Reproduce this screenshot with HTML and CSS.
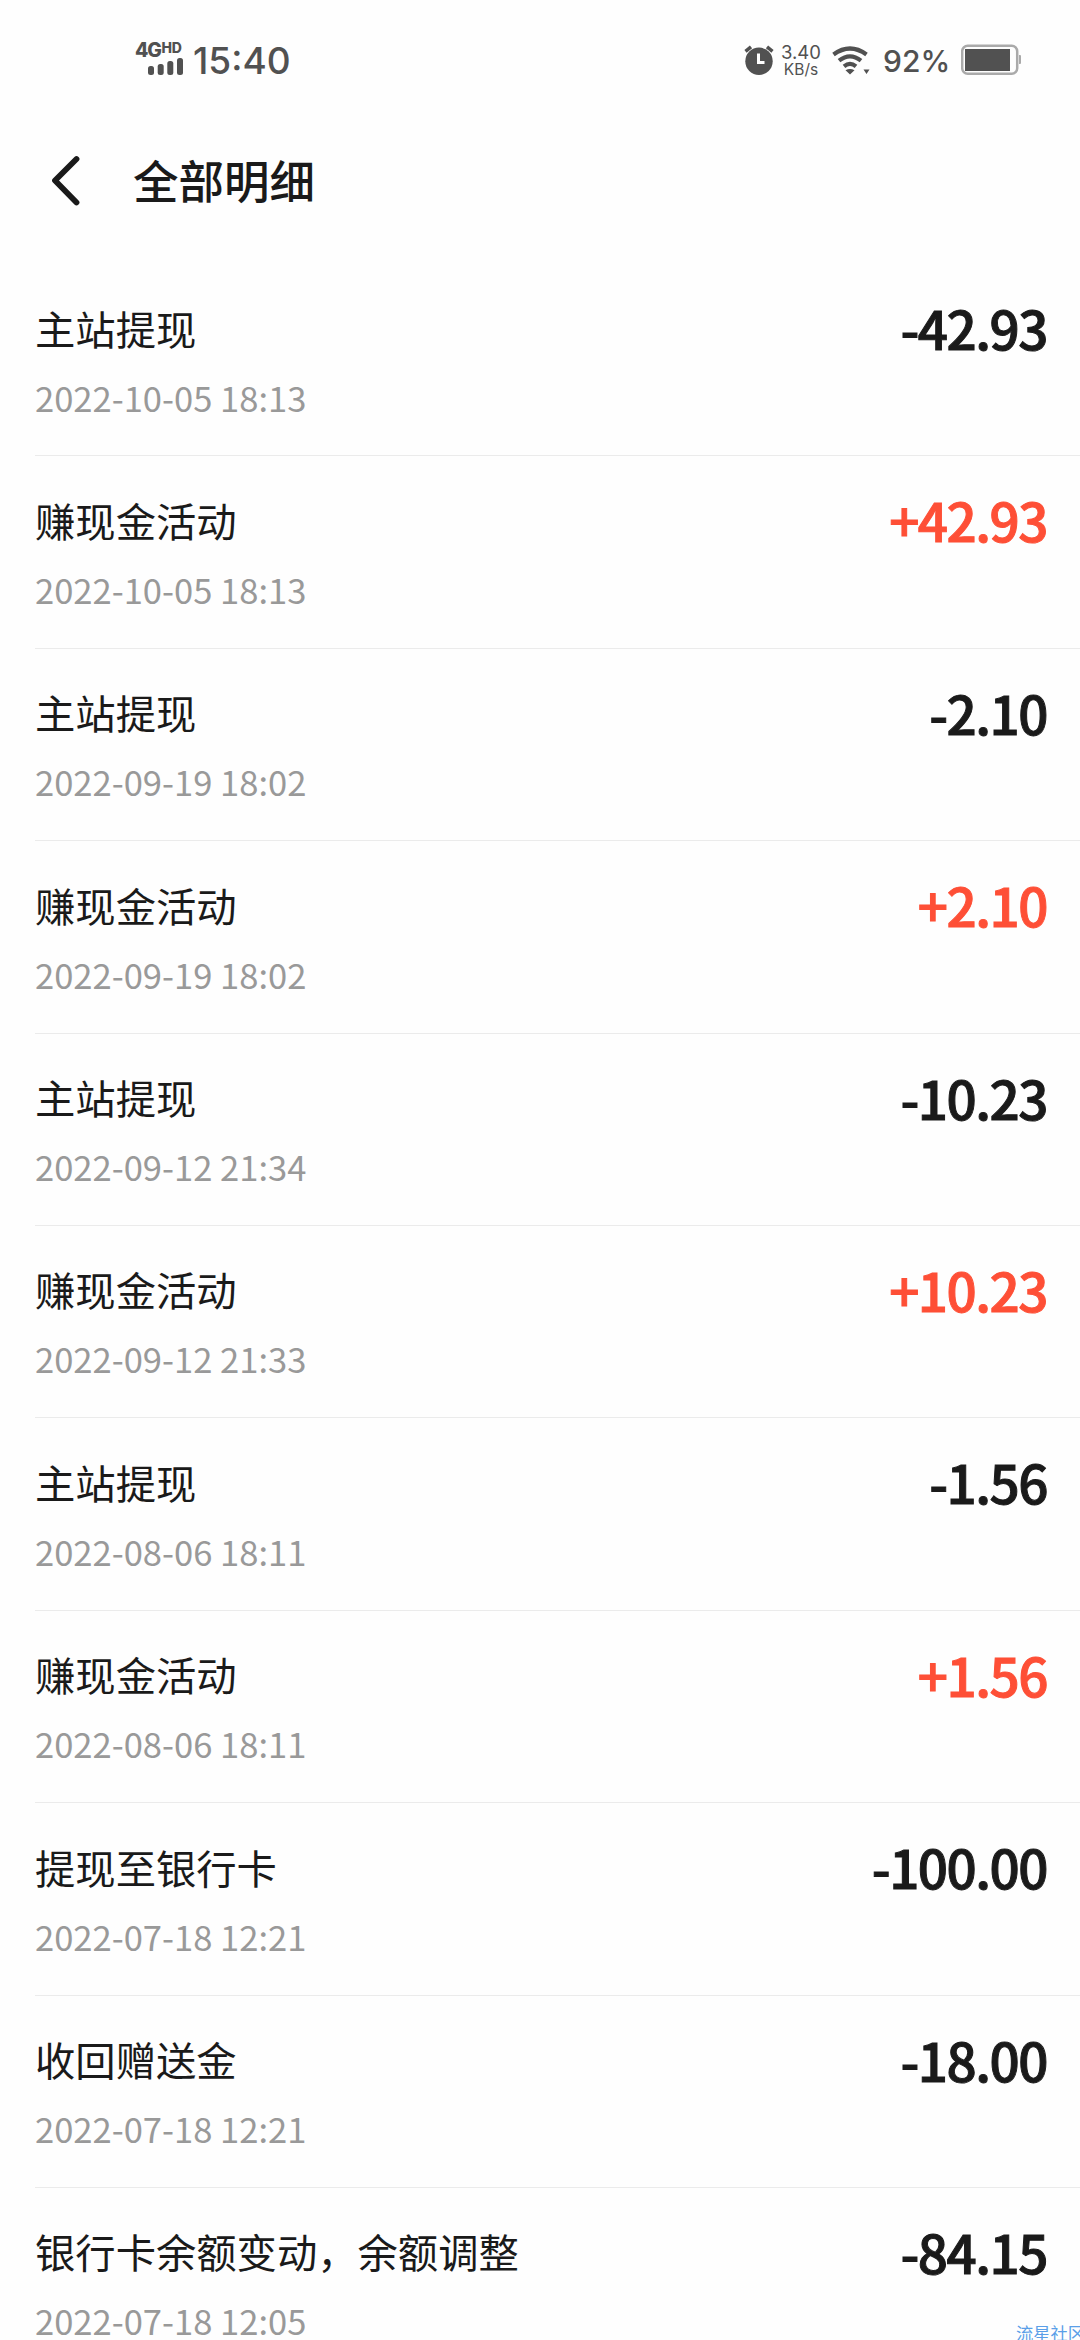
FILE: index.html
```html
<!DOCTYPE html>
<html lang="zh-CN">
<head>
<meta charset="utf-8">
<title>全部明细</title>
<link rel="stylesheet" href="styles.css">
</head>
<body>
<div class="screen">
  <div class="status">
    <div class="signal">
      <div class="network"><span class="gen">4G</span><span class="hd">HD</span></div>
      <svg class="bars" width="36" height="17" viewBox="0 0 36 17"><rect x="0" y="8" width="6" height="9" rx="2.5"/><rect x="9.7" y="6" width="6" height="11" rx="2.5"/><rect x="19.3" y="3" width="6" height="14" rx="2.5"/><rect x="29" y="0" width="6" height="17" rx="2.5"/></svg>
    </div>
    <div class="clock">15:40</div>
    <svg class="alarm" width="30" height="30" viewBox="0 0 30 30"><circle cx="15" cy="16.3" r="13.7"/><path class="bell" d="M1.500 6.300 7 1.800M28.500 6.300 23 1.800"/><path class="hands" d="M14.500 8.500V17.500H20.500"/></svg>
    <div class="speed"><span class="rate">3.40</span><span class="unit">KB/s</span></div>
    <svg class="wifi" width="38" height="29" viewBox="0 0 38 29"><g class="arcs"><path d="M1.5 8.500Q18 -3.500 34.5 8.500"/><path d="M7 14.700Q18 6 29 14.700"/><path d="M12 20.300Q18 15.500 24 20.300"/></g><path d="M13.500 24.300Q18 21.500 22.500 24.300L18 28.500ZM31.500 23.500H37.500L34.500 28Z"/></svg>
    <div class="percent">92%</div>
    <svg class="battery" width="62" height="32" viewBox="0 0 62 32"><rect class="case" x="1.2" y="1.7" width="55" height="28" rx="5.500"/><rect x="4" y="5" width="45" height="22"/><path class="tip" d="M58 11H59Q60 11 60 12V19Q60 20 59 20H58Z"/></svg>
  </div>
  <header class="header">
    <svg class="back" width="32" height="52" viewBox="0 0 32 52"><path d="M28.500 4 7 25.500 28.500 47.500"/></svg>
    <h1 class="heading">全部明细</h1>
  </header>
  <main class="list">
    <div class="row"><div class="info"><div class="name">主站提现</div><div class="date">2022-10-05 18:13</div></div><div class="amount">-42.93</div></div>
    <div class="row"><div class="info"><div class="name">赚现金活动</div><div class="date">2022-10-05 18:13</div></div><div class="amount income">+42.93</div></div>
    <div class="row"><div class="info"><div class="name">主站提现</div><div class="date">2022-09-19 18:02</div></div><div class="amount">-2.10</div></div>
    <div class="row"><div class="info"><div class="name">赚现金活动</div><div class="date">2022-09-19 18:02</div></div><div class="amount income">+2.10</div></div>
    <div class="row"><div class="info"><div class="name">主站提现</div><div class="date">2022-09-12 21:34</div></div><div class="amount">-10.23</div></div>
    <div class="row"><div class="info"><div class="name">赚现金活动</div><div class="date">2022-09-12 21:33</div></div><div class="amount income">+10.23</div></div>
    <div class="row"><div class="info"><div class="name">主站提现</div><div class="date">2022-08-06 18:11</div></div><div class="amount">-1.56</div></div>
    <div class="row"><div class="info"><div class="name">赚现金活动</div><div class="date">2022-08-06 18:11</div></div><div class="amount income">+1.56</div></div>
    <div class="row"><div class="info"><div class="name">提现至银行卡</div><div class="date">2022-07-18 12:21</div></div><div class="amount">-100.00</div></div>
    <div class="row"><div class="info"><div class="name">收回赠送金</div><div class="date">2022-07-18 12:21</div></div><div class="amount">-18.00</div></div>
    <div class="row"><div class="info"><div class="name">银行卡余额变动，余额调整</div><div class="date">2022-07-18 12:05</div></div><div class="amount">-84.15</div></div>
  </main>
  <div class="watermark">流星社区</div>
</div>
</body>
</html>
```
FILE: styles.css
```css
* { box-sizing: border-box; }
body { margin: 0; background: #fefefe; }
.screen {
  position: relative;
  width: 1080px;
  height: 2340px;
  overflow: hidden;
  background: #fefefe;
  color: #1a1a1a;
  font-family: "Noto Sans CJK SC", sans-serif;
}
.status {
  display: flex;
  align-items: flex-start;
  height: 120px;
  padding: 40px 57px 0 135px;
  color: #515151;
  fill: #515151;
  font-family: Inter, sans-serif;
}
.signal { width: 48px; margin-right: 10px; }
.network { display: flex; height: 18px; padding-top: 1px; font-weight: 800; line-height: 18px; white-space: nowrap; }
.gen { width: 26.5px; font-size: 19.5px; letter-spacing: -1.2px; }
.hd { margin-top: -2px; font-size: 14px; letter-spacing: -0.3px; }
.bars { display: block; margin: 0 0 0 13px; }
.clock { font-size: 37px; font-weight: 500; line-height: 41px; }
.alarm { margin: 5px 6px 0 auto; }
.bell { fill: none; stroke: #515151; stroke-width: 3.5; }
.hands { fill: none; stroke: #fff; stroke-width: 3; }
.speed { display: flex; flex-direction: column; align-items: center; width: 42px; padding-top: 3px; }
.rate { font-size: 18.5px; line-height: 19px; }
.unit { font-size: 15.5px; line-height: 16px; }
.wifi { margin: 6px 1px 0 10px; }
.arcs { fill: none; stroke: #515151; stroke-width: 4.2; }
.percent { width: 67px; margin: 0 11px 0 12px; font-size: 30px; font-weight: 500; line-height: 42px; }
.battery { margin-top: 4px; }
.case { fill: none; stroke: #aaa; stroke-width: 2.5; }
.tip { fill: #aaa; }
.header { display: flex; align-items: center; height: 144px; padding: 0 0 23px 48px; }
.back { fill: none; stroke: #1a1a1a; stroke-width: 5.8; stroke-linecap: round; stroke-linejoin: round; }
.heading { margin: -3px 0 0 53px; font-size: 45.5px; font-weight: 500; line-height: 68px; }
.list { padding-left: 35px; }
.row {
  display: flex;
  justify-content: space-between;
  height: 192.4px;
  padding: 34.5px 33px 0 0;
  border-bottom: 1px solid #ebebeb;
}
.name { font-size: 40.32px; line-height: 58px; }
.date { margin-top: 15px; color: #999; font-size: 34.56px; line-height: 50px; }
.amount { margin-top: -3.5px; font-size: 53px; font-weight: 500; line-height: 64px; letter-spacing: -1.5px; -webkit-text-stroke: 1px currentColor; }
.income { color: #fe4f36; }
.watermark {
  position: absolute;
  top: 2320px;
  left: 1016px;
  color: #5a9fe8;
  font-size: 17.3px;
  line-height: 26px;
  white-space: nowrap;
}
```
